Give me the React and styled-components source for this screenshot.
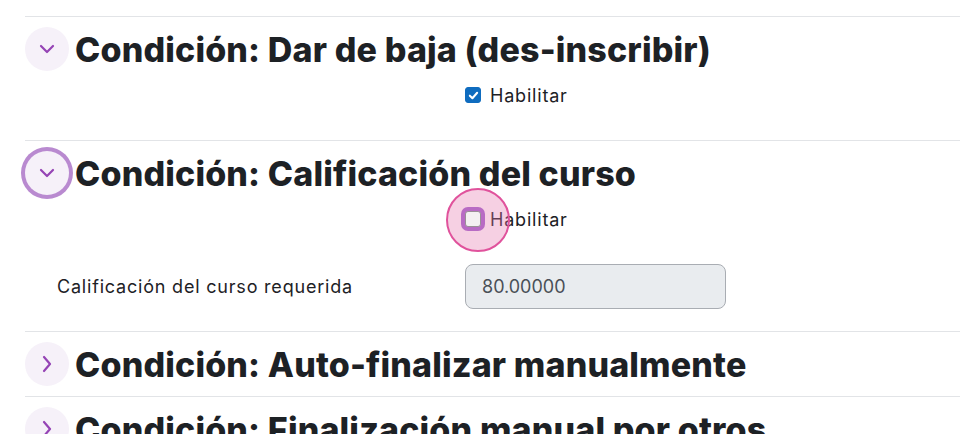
import React from "react";
import styled, { createGlobalStyle } from "styled-components";

const GlobalStyle = createGlobalStyle`
  html, body {
    margin: 0;
    padding: 0;
    background: #ffffff;
    overflow: hidden;
  }
  body {
    font-family: Inter, "Noto Sans", "Liberation Sans", sans-serif;
    color: #1d2125;
  }
`;

const Page = styled.div`
  width: 960px;
  height: 434px;
  padding: 16px 0 0 25px;
  box-sizing: border-box;
  overflow: hidden;
`;

const Section = styled.section`
  border-top: 1px solid #e2e4e7;
  padding: 10px 0 10px;
`;

const Header = styled.div`
  display: flex;
  align-items: center;
  gap: 6px;
  height: 44px;
`;

const Toggle = styled.button`
  flex: 0 0 44px;
  width: 44px;
  height: 44px;
  border-radius: 50%;
  border: none;
  padding: 0;
  background: #f6f1f9;
  color: #9544b5;
  display: flex;
  align-items: center;
  justify-content: center;
  box-shadow: ${({ $focused }) =>
    $focused ? "0 0 0 4px #b98ad0" : "none"};
`;

const Title = styled.h3`
  margin: 0;
  font-size: 34px;
  font-weight: 800;
  letter-spacing: 0.15px;
  white-space: nowrap;
  color: #1d2125;
`;

const Content = styled.div`
  padding-top: ${({ $top }) => $top}px;
`;

const FormRow = styled.div`
  display: grid;
  grid-template-columns: 408px 1fr;
  align-items: center;
  padding-left: 32px;
  min-height: ${({ $height }) => $height}px;
  margin-bottom: ${({ $gap }) => $gap}px;
`;

const Label = styled.label`
  font-size: 18px;
  letter-spacing: 0.8px;
  color: #1d2125;
`;

const CheckLabel = styled.label`
  position: relative;
  display: flex;
  align-items: center;
  gap: 9px;
  font-size: 18px;
  letter-spacing: 0.8px;
  color: #1d2125;
`;

const Box = styled.span`
  position: relative;
  width: 16px;
  height: 16px;
  box-sizing: border-box;
  border-radius: 3px;
  display: flex;
  align-items: center;
  justify-content: center;
  background: ${({ $checked }) => ($checked ? "#0f6cbf" : "#f4f0f2")};
  border: 1px solid ${({ $checked }) => ($checked ? "#0f6cbf" : "#9a8f96")};
  box-shadow: ${({ $focused }) => ($focused ? "0 0 0 4px #b86bc4" : "none")};
`;

const FocusRing = styled.span`
  position: absolute;
  left: -19px;
  top: 50%;
  width: 64px;
  height: 64px;
  margin-top: -31px;
  box-sizing: border-box;
  border-radius: 50%;
  border: 2px solid #e0529c;
  background: rgba(228, 120, 176, 0.35);
  pointer-events: none;
`;

const Input = styled.div`
  width: 261px;
  height: 45px;
  box-sizing: border-box;
  border: 1px solid #a9adb3;
  border-radius: 8px;
  background: #e9ecef;
  padding: 0 16px;
  display: flex;
  align-items: center;
  font-size: 18px;
  color: #4a5057;
`;

const ChevronDown = () => (
  <svg width="18" height="18" viewBox="0 0 18 18" fill="none">
    <path d="M3 6 L9 12 L15 6" stroke="currentColor" strokeWidth="2.2" strokeLinecap="round" strokeLinejoin="round" />
  </svg>
);

const ChevronRight = () => (
  <svg width="18" height="18" viewBox="0 0 18 18" fill="none">
    <path d="M6 2 L12 9 L6 16" stroke="currentColor" strokeWidth="2.2" strokeLinecap="round" strokeLinejoin="round" />
  </svg>
);

const Check = () => (
  <svg width="11" height="11" viewBox="0 0 12 12" fill="none">
    <path d="M2 6.2 L4.8 9 L10 3" stroke="#fff" strokeWidth="2.2" strokeLinecap="round" strokeLinejoin="round" />
  </svg>
);

const Checkbox = ({ checked, focused }) => (
  <CheckLabel>
    {focused && <FocusRing />}
    <Box $checked={checked} $focused={focused}>
      {checked && <Check />}
    </Box>
    Habilitar
  </CheckLabel>
);

export default function App() {
  return (
    <>
      <GlobalStyle />
      <Page>
        <Section>
          <Header>
            <Toggle><ChevronDown /></Toggle>
            <Title>Condición: Dar de baja (des-inscribir)</Title>
          </Header>
          <Content $top={9}>
            <FormRow $height={30} $gap={20}>
              <span />
              <Checkbox checked />
            </FormRow>
          </Content>
        </Section>

        <Section>
          <Header>
            <Toggle $focused><ChevronDown /></Toggle>
            <Title>Condición: Calificación del curso</Title>
          </Header>
          <Content $top={9}>
            <FormRow $height={30} $gap={30}>
              <span />
              <Checkbox focused />
            </FormRow>
            <FormRow $height={45} $gap={12}>
              <Label>Calificación del curso requerida</Label>
              <Input>80.00000</Input>
            </FormRow>
          </Content>
        </Section>

        <Section>
          <Header>
            <Toggle><ChevronRight /></Toggle>
            <Title>Condición: Auto-finalizar manualmente</Title>
          </Header>
        </Section>

        <Section>
          <Header>
            <Toggle><ChevronRight /></Toggle>
            <Title>Condición: Finalización manual por otros</Title>
          </Header>
        </Section>
      </Page>
    </>
  );
}
